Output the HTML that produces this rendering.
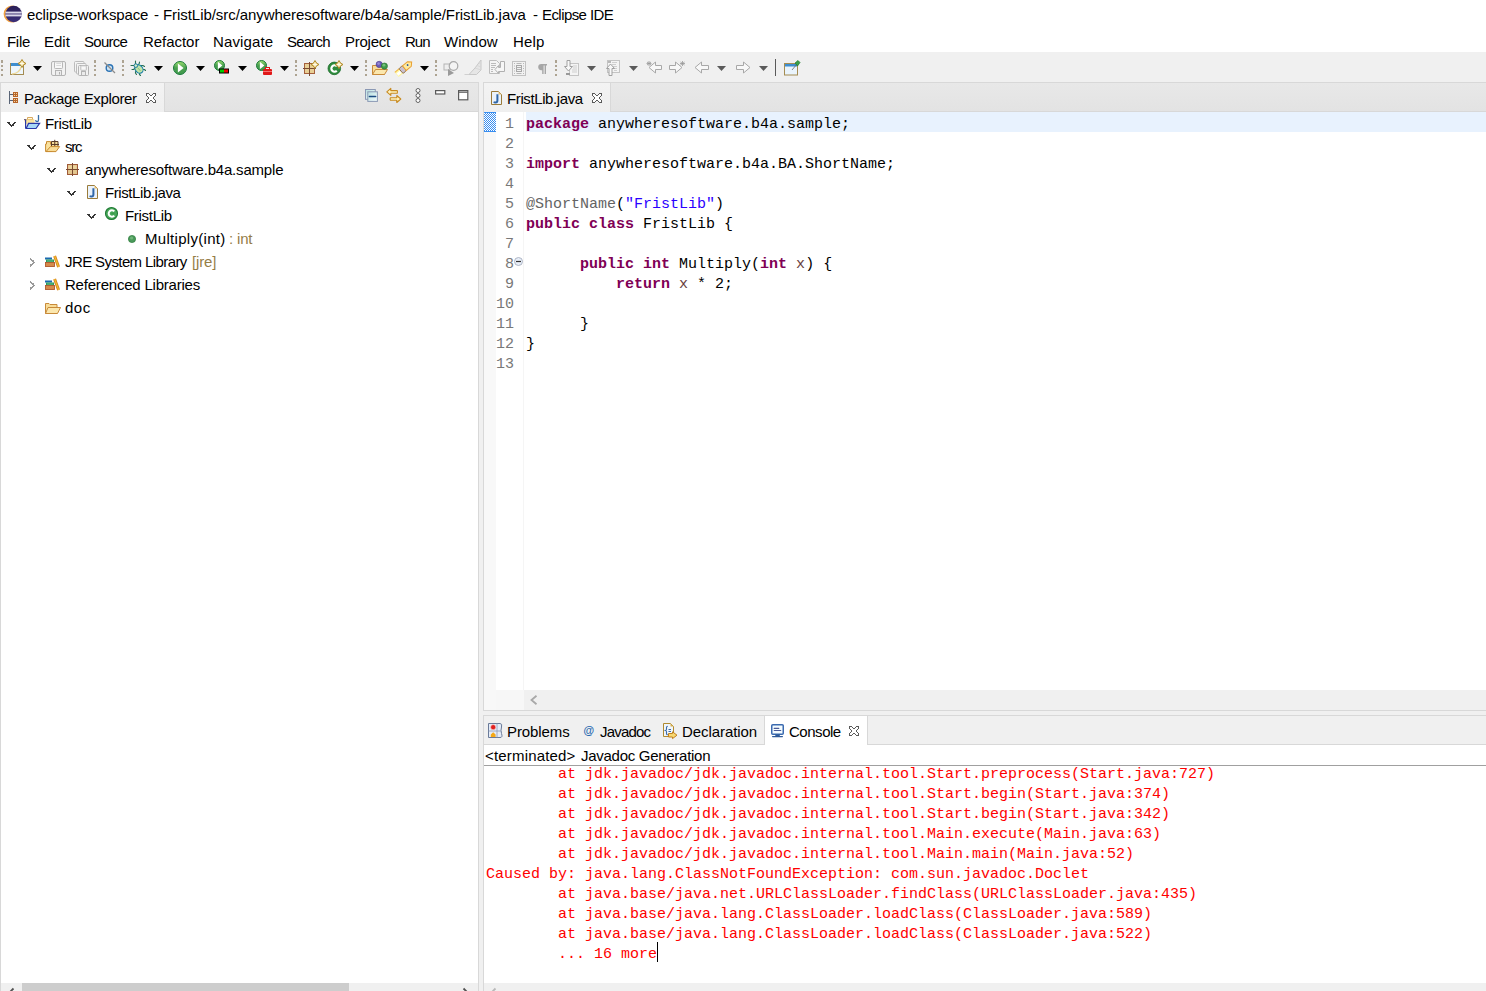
<!DOCTYPE html>
<html><head><meta charset="utf-8"><style>
*{box-sizing:border-box}
html,body{margin:0;padding:0}
body{width:1486px;height:991px;overflow:hidden;position:relative;background:#f0f0f0;font-family:"Liberation Sans",sans-serif;font-size:15px;color:#000}
.a{position:absolute}
svg.a{overflow:visible}
.t{position:absolute;white-space:pre;line-height:17px}
.m{position:absolute;white-space:pre;font-family:"Liberation Mono",monospace;font-size:15px;line-height:20px;tab-size:8}
.k{color:#7f0055;font-weight:bold}
.s{color:#2a00ff}
.an{color:#646464}
.ln{position:absolute;left:496px;width:18px;text-align:right;font-family:"Liberation Mono",monospace;font-size:15px;line-height:20px;color:#787878;white-space:pre}
.r{color:#ff0000}
.dec{color:#957d47}
</style></head><body>
<div class="a" style="left:0px;top:0px;width:1486px;height:52px;background:#fff;"></div>
<svg class="a" style="left:3px;top:5px" width="18" height="18" viewBox="0 0 18 18">
<defs><linearGradient id="eg" x1="0" y1="0" x2="0" y2="1"><stop offset="0" stop-color="#2b1f57"/><stop offset="1" stop-color="#3b2f7a"/></linearGradient></defs>
<circle cx="9.2" cy="9" r="8.6" fill="#f0a040"/>
<circle cx="10.7" cy="9" r="8.2" fill="url(#eg)"/>
<rect x="2.5" y="6.6" width="16.3" height="1.6" fill="#dcd8ea"/>
<rect x="2.5" y="8.2" width="16.3" height="1.6" fill="#9a92b8"/>
<rect x="2.5" y="9.8" width="16.3" height="1.6" fill="#dcd8ea"/>
</svg>
<div class="t" style="left:27px;top:6px;letter-spacing:-0.12px">eclipse-workspace</div>
<div class="t" style="left:154px;top:6px">-</div>
<div class="t" style="left:163px;top:6px;letter-spacing:-0.057px">FristLib/src/anywheresoftware/b4a/sample/FristLib.java</div>
<div class="t" style="left:533px;top:6px">-</div>
<div class="t" style="left:542px;top:6px;letter-spacing:-0.57px">Eclipse IDE</div>
<div class="t" style="left:7px;top:33px;letter-spacing:-0.3px">File</div>
<div class="t" style="left:44px;top:33px">Edit</div>
<div class="t" style="left:84px;top:33px;letter-spacing:-0.72px">Source</div>
<div class="t" style="left:143px;top:33px;letter-spacing:-0.04px">Refactor</div>
<div class="t" style="left:213px;top:33px;letter-spacing:0.13px">Navigate</div>
<div class="t" style="left:287px;top:33px;letter-spacing:-0.78px">Search</div>
<div class="t" style="left:345px;top:33px;letter-spacing:-0.25px">Project</div>
<div class="t" style="left:405px;top:33px;letter-spacing:-1.0px">Run</div>
<div class="t" style="left:444px;top:33px;letter-spacing:0.06px">Window</div>
<div class="t" style="left:513px;top:33px;letter-spacing:0.2px">Help</div>
<svg class="a" style="left:1px;top:59px" width="2" height="18" viewBox="0 0 2 18"><rect x="0" y="1" width="2" height="3" fill="#ada391"/><rect x="0" y="6" width="2" height="2" fill="#ada391"/><rect x="0" y="10" width="2" height="2" fill="#ada391"/><rect x="0" y="15" width="2" height="2" fill="#ada391"/></svg>
<svg class="a" style="left:94px;top:59px" width="2" height="18" viewBox="0 0 2 18"><rect x="0" y="1" width="2" height="3" fill="#ada391"/><rect x="0" y="6" width="2" height="2" fill="#ada391"/><rect x="0" y="10" width="2" height="2" fill="#ada391"/><rect x="0" y="15" width="2" height="2" fill="#ada391"/></svg>
<svg class="a" style="left:122px;top:59px" width="2" height="18" viewBox="0 0 2 18"><rect x="0" y="1" width="2" height="3" fill="#ada391"/><rect x="0" y="6" width="2" height="2" fill="#ada391"/><rect x="0" y="10" width="2" height="2" fill="#ada391"/><rect x="0" y="15" width="2" height="2" fill="#ada391"/></svg>
<svg class="a" style="left:295px;top:59px" width="2" height="18" viewBox="0 0 2 18"><rect x="0" y="1" width="2" height="3" fill="#ada391"/><rect x="0" y="6" width="2" height="2" fill="#ada391"/><rect x="0" y="10" width="2" height="2" fill="#ada391"/><rect x="0" y="15" width="2" height="2" fill="#ada391"/></svg>
<svg class="a" style="left:365px;top:59px" width="2" height="18" viewBox="0 0 2 18"><rect x="0" y="1" width="2" height="3" fill="#ada391"/><rect x="0" y="6" width="2" height="2" fill="#ada391"/><rect x="0" y="10" width="2" height="2" fill="#ada391"/><rect x="0" y="15" width="2" height="2" fill="#ada391"/></svg>
<svg class="a" style="left:435px;top:59px" width="2" height="18" viewBox="0 0 2 18"><rect x="0" y="1" width="2" height="3" fill="#ada391"/><rect x="0" y="6" width="2" height="2" fill="#ada391"/><rect x="0" y="10" width="2" height="2" fill="#ada391"/><rect x="0" y="15" width="2" height="2" fill="#ada391"/></svg>
<svg class="a" style="left:555px;top:59px" width="2" height="18" viewBox="0 0 2 18"><rect x="0" y="1" width="2" height="3" fill="#ada391"/><rect x="0" y="6" width="2" height="2" fill="#ada391"/><rect x="0" y="10" width="2" height="2" fill="#ada391"/><rect x="0" y="15" width="2" height="2" fill="#ada391"/></svg>
<svg class="a" style="left:10px;top:60px" width="16" height="16" viewBox="0 0 16 16">
<rect x="0.5" y="3.5" width="13" height="11" fill="#eef6fc" stroke="#a48c52"/>
<rect x="1" y="3" width="12" height="3" fill="#3e8ed0"/>
<path d="M2 14 Q10 13 11 7" stroke="#ecd89a" stroke-width="1.5" fill="none"/>
<path d="M12 -0.5 Q13 2.5 16 3.5 Q13 4.5 12 7.5 Q11 4.5 8 3.5 Q11 2.5 12 -0.5Z" fill="#f0d890" stroke="#b08a2a" stroke-width="1"/><path d="M12 1.5V5.5M10 3.5H14" stroke="#fffbe8" stroke-width="1.2"/>
</svg>
<svg class="a" style="left:33px;top:66px" width="9" height="5" viewBox="0 0 9 5"><path d="M0 0H9L4.5 5Z" fill="#000"/></svg>
<svg class="a" style="left:51px;top:61px" width="15" height="15" viewBox="0 0 15 15">
<rect x="0.5" y="0.5" width="14" height="14" rx="1.5" fill="#f2f2f2" stroke="#b4b4b4"/>
<rect x="3.5" y="0.8" width="8" height="6.7" rx="0.8" fill="#f8f8f8" stroke="#b8b8b8"/>
<path d="M5.3 2.5H10M5.3 4.5H10" stroke="#d0d0d0" stroke-width="0.8"/>
<rect x="4.5" y="9.5" width="6" height="5" fill="#ececec" stroke="#b4b4b4"/>
<rect x="8" y="11" width="1" height="2.5" fill="#b0b0b0"/>
</svg>
<svg class="a" style="left:74px;top:61px" width="16" height="15" viewBox="0 0 16 15">
<rect x="0.5" y="0.5" width="9.5" height="10.5" rx="1" fill="#f4f4f4" stroke="#bcbcbc"/>
<rect x="2.5" y="2.5" width="9.5" height="10.5" rx="1" fill="#f4f4f4" stroke="#bcbcbc"/>
<rect x="4.5" y="4.5" width="10" height="10" rx="1" fill="#f2f2f2" stroke="#b4b4b4"/>
<rect x="6.8" y="4.8" width="5.5" height="4.5" rx="0.6" fill="#f8f8f8" stroke="#bcbcbc"/>
<rect x="7.5" y="10.5" width="4" height="4" fill="#ececec" stroke="#b4b4b4"/>
</svg>
<svg class="a" style="left:104px;top:62px" width="12" height="12" viewBox="0 0 12 12">
<circle cx="5.5" cy="6" r="3.3" fill="#cde3f3" stroke="#2a72b4" stroke-width="1.4"/>
<path d="M0.5 0.5 L11 11" stroke="#8c8c8c" stroke-width="1.2"/>
</svg>
<svg class="a" style="left:128px;top:58px" width="22" height="20" viewBox="0 0 22 20">
<g stroke="#2a7050" stroke-width="1.1" fill="none" stroke-linecap="round">
<path d="M7.5 3 V6"/><path d="M11.5 4 L11.2 5.5 L10.3 6.8"/>
<path d="M3 7.5 H6"/><path d="M4 11.5 H6 L6.5 10"/>
<path d="M7.5 13.5 V15 L8.5 16.5"/><path d="M11.5 15 V16.5 L12.5 17.5"/>
<path d="M13 7.5 H15 L16.5 8.5"/><path d="M15 11.5 H16.5 L17.5 12.5"/></g>
<ellipse cx="11" cy="11" rx="3.6" ry="4.6" transform="rotate(-40 11 11)" fill="#c4e4a8" stroke="#1a80a8" stroke-width="1.1"/>
<path d="M9.5 9.5 L12.5 13" stroke="#7ab878" stroke-width="0.8"/>
<circle cx="7.8" cy="7.6" r="1.8" fill="#d8f0c8" stroke="#1a7aa0" stroke-width="1"/>
</svg>
<svg class="a" style="left:154px;top:66px" width="9" height="5" viewBox="0 0 9 5"><path d="M0 0H9L4.5 5Z" fill="#000"/></svg>
<svg class="a" style="left:172px;top:60px" width="16" height="16" viewBox="0 0 16 16"><defs><linearGradient id="rg87" x1="0" y1="0" x2="0" y2="1"><stop offset="0" stop-color="#9ade6e"/><stop offset="0.5" stop-color="#4aa050"/><stop offset="1" stop-color="#3f9a4c"/></linearGradient></defs>
<circle cx="8" cy="8" r="6.5" fill="url(#rg87)" stroke="#1a7a3a" stroke-width="1"/>
<path d="M5.90 3.38 L11.64 8.00 L5.90 12.62Z" fill="#fff"/></svg>
<svg class="a" style="left:196px;top:66px" width="9" height="5" viewBox="0 0 9 5"><path d="M0 0H9L4.5 5Z" fill="#000"/></svg>
<svg class="a" style="left:213px;top:59px" width="17" height="17" viewBox="0 0 17 17"><defs><linearGradient id="rg6_55_5" x1="0" y1="0" x2="0" y2="1"><stop offset="0" stop-color="#9ade6e"/><stop offset="0.5" stop-color="#4aa050"/><stop offset="1" stop-color="#3f9a4c"/></linearGradient></defs>
<circle cx="6.5" cy="6.5" r="5.0" fill="url(#rg6_55_5)" stroke="#1a7a3a" stroke-width="1"/>
<path d="M4.85 2.87 L9.36 6.50 L4.85 10.13Z" fill="#fff"/>
<rect x="6" y="9.5" width="10" height="5" fill="#000"/>
<rect x="7" y="10.5" width="4" height="3" fill="#0c0"/>
<rect x="11" y="10.5" width="4" height="3" fill="#e00"/>
</svg>
<svg class="a" style="left:238px;top:66px" width="9" height="5" viewBox="0 0 9 5"><path d="M0 0H9L4.5 5Z" fill="#000"/></svg>
<svg class="a" style="left:255px;top:59px" width="18" height="17" viewBox="0 0 18 17"><defs><linearGradient id="rg6_55_5" x1="0" y1="0" x2="0" y2="1"><stop offset="0" stop-color="#9ade6e"/><stop offset="0.5" stop-color="#4aa050"/><stop offset="1" stop-color="#3f9a4c"/></linearGradient></defs>
<circle cx="6.5" cy="6.5" r="5.0" fill="url(#rg6_55_5)" stroke="#1a7a3a" stroke-width="1"/>
<path d="M4.85 2.87 L9.36 6.50 L4.85 10.13Z" fill="#fff"/>
<rect x="8" y="10" width="9" height="6" rx="1" fill="#e01818"/>
<rect x="10.5" y="8.5" width="4" height="2" fill="none" stroke="#e01818"/>
<path d="M8 12.5H17" stroke="#ff9a9a" stroke-width="0.7"/>
</svg>
<svg class="a" style="left:280px;top:66px" width="9" height="5" viewBox="0 0 9 5"><path d="M0 0H9L4.5 5Z" fill="#000"/></svg>
<svg class="a" style="left:303px;top:61px" width="16" height="16" viewBox="0 0 16 16">
<rect x="1.5" y="2.5" width="10" height="10" fill="#e8cf95" stroke="#a45f3c"/>
<path d="M6.5 1V15M0 7.5H13" stroke="#7a4a30" stroke-width="1"/>
<path d="M12 -0.5 Q13 2.5 16 3.5 Q13 4.5 12 7.5 Q11 4.5 8 3.5 Q11 2.5 12 -0.5Z" fill="#f0d890" stroke="#b08a2a" stroke-width="1"/><path d="M12 1.5V5.5M10 3.5H14" stroke="#fffbe8" stroke-width="1.2"/>
</svg>
<svg class="a" style="left:327px;top:61px" width="16" height="16" viewBox="0 0 16 16">
<circle cx="7.3" cy="7.4" r="6.3" fill="#2e8b3c" stroke="#1b6a2a" stroke-width="0.8"/>
<path d="M9.8 5.2 A3.2 3.2 0 1 0 9.8 9.8" stroke="#fff" stroke-width="2.2" fill="none"/>
<path d="M12 -0.5 Q13 2.5 16 3.5 Q13 4.5 12 7.5 Q11 4.5 8 3.5 Q11 2.5 12 -0.5Z" fill="#f0d890" stroke="#b08a2a" stroke-width="1"/><path d="M12 1.5V5.5M10 3.5H14" stroke="#fffbe8" stroke-width="1.2"/>
</svg>
<svg class="a" style="left:350px;top:66px" width="9" height="5" viewBox="0 0 9 5"><path d="M0 0H9L4.5 5Z" fill="#000"/></svg>
<svg class="a" style="left:372px;top:60px" width="16" height="16" viewBox="0 0 16 16">
<path d="M0.5 5.5 H5 L6 7 H12.5 V14.5 H0.5Z" fill="#f7dc98" stroke="#c88a3a"/>
<path d="M0.5 14.5 L3.5 9.5 H15.5 L12.5 14.5Z" fill="#fbe7ae" stroke="#c88a3a"/>
<circle cx="7.2" cy="4.4" r="3.1" fill="#6b5bb8" stroke="#4a3a90" stroke-width="0.6"/><circle cx="6.6" cy="3.6" r="1.4" fill="#a89ae0" opacity="0.7"/>
<circle cx="12.4" cy="6.1" r="3.1" fill="#3f9a4a" stroke="#246a2e" stroke-width="0.6"/><circle cx="11.9" cy="5.2" r="1.4" fill="#8ad090" opacity="0.7"/>
</svg>
<svg class="a" style="left:392px;top:57px" width="24" height="22" viewBox="0 0 24 22">
<g transform="rotate(-40 12 11.5)">
<rect x="2.5" y="8.5" width="6.5" height="6" fill="#fff6a0"/>
<rect x="3" y="10.5" width="5" height="3" fill="#ffffff"/>
<path d="M2.5 8.5 H8" stroke="#f0b040" stroke-width="1"/>
<rect x="8" y="8.3" width="4.5" height="6.4" rx="1" fill="#c8c0d0" stroke="#907040" stroke-width="0.9"/>
<path d="M12.5 8.5 H19 L22 11.5 L19 14.5 H12.5Z" fill="#fdeaa0" stroke="#eaa030" stroke-width="1"/>
<circle cx="17" cy="11.2" r="0.9" fill="#2a5aa0"/>
</g>
</svg>
<svg class="a" style="left:420px;top:66px" width="9" height="5" viewBox="0 0 9 5"><path d="M0 0H9L4.5 5Z" fill="#000"/></svg>
<svg class="a" style="left:443px;top:61px" width="16" height="16" viewBox="0 0 16 16">
<rect x="1" y="3" width="6" height="6" fill="#eee" stroke="#b4b4b4"/>
<circle cx="10.5" cy="5" r="4.3" fill="#f4f4f4" stroke="#a8a8a8" stroke-width="1.2"/>
<path d="M5 8 L11 12 L5 15Z" fill="#9a9a9a"/>
</svg>
<svg class="a" style="left:464px;top:59px" width="18" height="17" viewBox="0 0 18 17">
<path d="M5 15.5 L11 9 L17 1 V11 L12.5 15.5Z" fill="#e6e6e6" stroke="#c8c8c8" stroke-width="1" stroke-linejoin="round"/>
<path d="M11 9 L17 11 M13 6.5 L17 8 M15 4 L17 5" stroke="#d4d4d4" stroke-width="0.8"/>
<path d="M0.5 15.5 H5" stroke="#d0d0d0" stroke-width="1"/>
</svg>
<svg class="a" style="left:489px;top:60px" width="16" height="15" viewBox="0 0 16 15">
<path d="M0.5 0.5 H7.5 L10.5 3.5 V13.5 H0.5Z" fill="#f4f4f4" stroke="#bdbdbd"/>
<path d="M2 3.5H7M2 5.5H7M2 7.5H6M2 9.5H4M2 11.5H4" stroke="#acacac" stroke-width="0.8"/>
<path d="M11.5 1.5 H15.5 V11.5 H9.5 V13.5 L6 9.5 L9.5 5.5 V7.5 H11.5Z" fill="#f6f6f6" stroke="#b0b0b0" stroke-width="1" stroke-linejoin="round"/>
</svg>
<svg class="a" style="left:512px;top:61px" width="14" height="15" viewBox="0 0 14 15">
<rect x="0.5" y="0.5" width="13" height="14" fill="#f2f2f2" stroke="#c2c2c2"/>
<path d="M2 2.5H3M2 5H3M2 7.5H3M2 10H3M2 12.5H3M11 2.5H12M11 5H12M11 7.5H12M11 10H12M11 12.5H12M4.5 2.5H9.5M4.5 12.5H9.5" stroke="#b8b8b8"/>
<rect x="4.5" y="4.5" width="5" height="6" fill="none" stroke="#a8a8a8"/>
<path d="M4.5 6.5H9.5M4.5 8.5H9.5" stroke="#b0b0b0"/>
</svg>
<svg class="a" style="left:538px;top:64px" width="9" height="10" viewBox="0 0 9 10">
<path d="M3.3 0 H9 V1.6 H8 V10 H6.6 V1.6 H5.6 V10 H4.2 V6.2 H3.3 A3.1 3.1 0 0 1 3.3 0Z" fill="#a6a6a6"/>
</svg>
<svg class="a" style="left:564px;top:60px" width="15" height="16" viewBox="0 0 15 16">
<rect x="5.5" y="3.5" width="9" height="12" fill="#f4f4f4" stroke="#c4c4c4"/>
<path d="M9 6H13M9 8H13M8 10H13M8 12H13" stroke="#cfcfcf"/>
<path d="M3 0.5H6V6.5H8.5L4.5 11L0.5 6.5H3Z" fill="#f8f8f8" stroke="#a0a0a0"/>
<rect x="2" y="13" width="4" height="2" fill="#999"/>
</svg>
<svg class="a" style="left:587px;top:66px" width="9" height="5" viewBox="0 0 9 5"><path d="M0 0H9L4.5 5Z" fill="#5a5a5a"/></svg>
<svg class="a" style="left:606px;top:60px" width="15" height="16" viewBox="0 0 15 16">
<rect x="1.5" y="0.5" width="12" height="12" fill="#f4f4f4" stroke="#c4c4c4"/>
<rect x="2" y="1" width="3" height="2" fill="#b8b8b8"/>
<path d="M6 2.5H11M6 4.5H10M7 6.5H11M8 8.5H11M8 10.5H11" stroke="#cfcfcf"/>
<path d="M4.5 4L8.5 8.5H6V15.5H3V8.5H0.5Z" fill="#f8f8f8" stroke="#a0a0a0"/>
</svg>
<svg class="a" style="left:629px;top:66px" width="9" height="5" viewBox="0 0 9 5"><path d="M0 0H9L4.5 5Z" fill="#5a5a5a"/></svg>
<svg class="a" style="left:646px;top:61px" width="17" height="13" viewBox="0 0 17 13">
<path d="M15.5 4.5H9.5V1L3 6.5L9.5 12V8.5H15.5Z" fill="#f8f8f8" stroke="#a8a8a8"/>
<path d="M3 0V5M0.5 2.5H5.5M1 1L5 4M5 1L1 4" stroke="#999" stroke-width="0.8"/>
</svg>
<svg class="a" style="left:669px;top:61px" width="17" height="13" viewBox="0 0 17 13">
<path d="M0.5 4.5H6.5V1L13 6.5L6.5 12V8.5H0.5Z" fill="#f8f8f8" stroke="#a8a8a8"/>
<path d="M13.5 0V5M11 2.5H16M11.5 1L15.5 4M15.5 1L11.5 4" stroke="#999" stroke-width="0.8"/>
</svg>
<svg class="a" style="left:694px;top:61px" width="15" height="13" viewBox="0 0 15 13">
<path d="M14.5 4.5H7.5V1L1 6.5L7.5 12V8.5H14.5Z" fill="#f8f8f8" stroke="#a8a8a8"/>
</svg>
<svg class="a" style="left:717px;top:66px" width="9" height="5" viewBox="0 0 9 5"><path d="M0 0H9L4.5 5Z" fill="#5a5a5a"/></svg>
<svg class="a" style="left:736px;top:61px" width="15" height="13" viewBox="0 0 15 13">
<path d="M0.5 4.5H7.5V1L14 6.5L7.5 12V8.5H0.5Z" fill="#f8f8f8" stroke="#a8a8a8"/>
</svg>
<svg class="a" style="left:759px;top:66px" width="9" height="5" viewBox="0 0 9 5"><path d="M0 0H9L4.5 5Z" fill="#5a5a5a"/></svg>
<div class="a" style="left:775px;top:59px;width:1px;height:17px;background:#5a5a5a;"></div>
<svg class="a" style="left:784px;top:61px" width="16" height="16" viewBox="0 0 16 16">
<rect x="0.5" y="2.5" width="13" height="11.5" fill="#eaf4fc" stroke="#a48c52"/>
<rect x="1" y="3" width="12" height="2.5" fill="#3e8ed0"/>
<path d="M8 9 L13 3" stroke="#666" stroke-width="0.8"/>
<path d="M11 2 L14 -0.5 L16 1.5 L13.5 5 Z" fill="#3aa04a" stroke="#1f7a2a" stroke-width="0.7"/>
</svg>
<div class="a" style="left:0px;top:82px;width:479px;height:909px;background:#fff;border:1px solid #d8d8d8;border-bottom:none"></div>
<div class="a" style="left:1px;top:83px;width:477px;height:29px;background:linear-gradient(#e8e8e8,#e3e3e3);border-bottom:1px solid #d8d8d8"></div>
<div class="a" style="left:1px;top:83px;width:164px;height:29px;background:linear-gradient(#f3f3f3,#efefef);border-right:1px solid #d8d8d8"></div>
<svg class="a" style="left:9px;top:91px" width="10" height="13" viewBox="0 0 10 13">
<rect x="0" y="0" width="1" height="13" fill="#5a6577"/>
<rect x="1" y="3" width="3" height="1" fill="#5a6577"/>
<rect x="1" y="9" width="3" height="1" fill="#5a6577"/>
<rect x="4" y="1" width="5" height="5" fill="#b8652a"/>
<rect x="4" y="7" width="5" height="5" fill="#b8652a"/>
<g fill="#f0d8a8"><rect x="5" y="2" width="1" height="1"/><rect x="7" y="2" width="1" height="1"/><rect x="5" y="4" width="1" height="1"/><rect x="7" y="4" width="1" height="1"/>
<rect x="5" y="8" width="1" height="1"/><rect x="7" y="8" width="1" height="1"/><rect x="5" y="10" width="1" height="1"/><rect x="7" y="10" width="1" height="1"/></g>
</svg>
<div class="t" style="left:24px;top:90px;letter-spacing:-0.36px">Package Explorer</div>
<svg class="a" style="left:146px;top:93px" width="10" height="10" viewBox="0 0 10 10"><g fill="#fff" shape-rendering="crispEdges"><rect x="1" y="1" width="1" height="1"/><rect x="2" y="1" width="1" height="1"/><rect x="7" y="1" width="1" height="1"/><rect x="8" y="1" width="1" height="1"/><rect x="1" y="2" width="1" height="1"/><rect x="2" y="2" width="1" height="1"/><rect x="3" y="2" width="1" height="1"/><rect x="6" y="2" width="1" height="1"/><rect x="7" y="2" width="1" height="1"/><rect x="8" y="2" width="1" height="1"/><rect x="2" y="3" width="1" height="1"/><rect x="3" y="3" width="1" height="1"/><rect x="4" y="3" width="1" height="1"/><rect x="5" y="3" width="1" height="1"/><rect x="6" y="3" width="1" height="1"/><rect x="7" y="3" width="1" height="1"/><rect x="3" y="4" width="1" height="1"/><rect x="4" y="4" width="1" height="1"/><rect x="5" y="4" width="1" height="1"/><rect x="6" y="4" width="1" height="1"/><rect x="3" y="5" width="1" height="1"/><rect x="4" y="5" width="1" height="1"/><rect x="5" y="5" width="1" height="1"/><rect x="6" y="5" width="1" height="1"/><rect x="2" y="6" width="1" height="1"/><rect x="3" y="6" width="1" height="1"/><rect x="4" y="6" width="1" height="1"/><rect x="5" y="6" width="1" height="1"/><rect x="6" y="6" width="1" height="1"/><rect x="7" y="6" width="1" height="1"/><rect x="1" y="7" width="1" height="1"/><rect x="2" y="7" width="1" height="1"/><rect x="3" y="7" width="1" height="1"/><rect x="6" y="7" width="1" height="1"/><rect x="7" y="7" width="1" height="1"/><rect x="8" y="7" width="1" height="1"/><rect x="1" y="8" width="1" height="1"/><rect x="2" y="8" width="1" height="1"/><rect x="7" y="8" width="1" height="1"/><rect x="8" y="8" width="1" height="1"/></g><g fill="#5a5a5a" shape-rendering="crispEdges"><rect x="0" y="0" width="1" height="1"/><rect x="1" y="0" width="1" height="1"/><rect x="2" y="0" width="1" height="1"/><rect x="7" y="0" width="1" height="1"/><rect x="8" y="0" width="1" height="1"/><rect x="9" y="0" width="1" height="1"/><rect x="0" y="1" width="1" height="1"/><rect x="3" y="1" width="1" height="1"/><rect x="6" y="1" width="1" height="1"/><rect x="9" y="1" width="1" height="1"/><rect x="0" y="2" width="1" height="1"/><rect x="4" y="2" width="1" height="1"/><rect x="5" y="2" width="1" height="1"/><rect x="9" y="2" width="1" height="1"/><rect x="1" y="3" width="1" height="1"/><rect x="8" y="3" width="1" height="1"/><rect x="2" y="4" width="1" height="1"/><rect x="7" y="4" width="1" height="1"/><rect x="2" y="5" width="1" height="1"/><rect x="7" y="5" width="1" height="1"/><rect x="1" y="6" width="1" height="1"/><rect x="8" y="6" width="1" height="1"/><rect x="0" y="7" width="1" height="1"/><rect x="4" y="7" width="1" height="1"/><rect x="5" y="7" width="1" height="1"/><rect x="9" y="7" width="1" height="1"/><rect x="0" y="8" width="1" height="1"/><rect x="3" y="8" width="1" height="1"/><rect x="6" y="8" width="1" height="1"/><rect x="9" y="8" width="1" height="1"/><rect x="0" y="9" width="1" height="1"/><rect x="1" y="9" width="1" height="1"/><rect x="2" y="9" width="1" height="1"/><rect x="7" y="9" width="1" height="1"/><rect x="8" y="9" width="1" height="1"/><rect x="9" y="9" width="1" height="1"/></g></svg>
<svg class="a" style="left:362px;top:84px" width="42" height="22" viewBox="0 0 42 22">
<defs><linearGradient id="tg" x1="0" y1="0" x2="1" y2="1"><stop offset="0" stop-color="#b8e0e0"/><stop offset="1" stop-color="#f4fcfc"/></linearGradient></defs>
<rect x="3.5" y="5.5" width="9.8" height="9.8" fill="url(#tg)" stroke="#8a98b4" stroke-width="1"/>
<rect x="5.8" y="7.8" width="9.6" height="9.6" fill="url(#tg)" stroke="#8a98b4" stroke-width="1"/>
<path d="M7.4 12.4 H13.6" stroke="#1a4a80" stroke-width="1.5" stroke-linecap="round"/>
<path d="M24.8 7.9 L28.8 4.4 V6.6 H35.2 Q35.8 7.9 35.2 9.2 H28.8 V11.4Z" fill="#fff4c0" stroke="#c88a20" stroke-width="1.1" stroke-linejoin="round"/>
<path d="M38.8 15 L34.8 11.5 V13.7 H28.4 Q27.8 15 28.4 16.3 H34.8 V18.5Z" fill="#fff4c0" stroke="#c88a20" stroke-width="1.1" stroke-linejoin="round"/>
</svg>
<svg class="a" style="left:415px;top:88px" width="6" height="15" viewBox="0 0 6 15">
<circle cx="3" cy="2.5" r="2" fill="#fff" stroke="#555" stroke-width="0.9"/>
<circle cx="3" cy="7.5" r="2" fill="#fff" stroke="#555" stroke-width="0.9"/>
<circle cx="3" cy="12.5" r="2" fill="#fff" stroke="#555" stroke-width="0.9"/>
</svg>
<svg class="a" style="left:435px;top:90px" width="11" height="5" viewBox="0 0 11 5"><rect x="0.6" y="0.6" width="9.2" height="3.4" fill="#fff" stroke="#5a5a5a" stroke-width="1.2"/></svg>
<svg class="a" style="left:458px;top:90px" width="11" height="11" viewBox="0 0 11 11"><rect x="0.6" y="0.6" width="9.2" height="9.2" fill="#fff" stroke="#5a5a5a" stroke-width="1.2"/><path d="M1 2.2H9.6" stroke="#5a5a5a" stroke-width="1.2"/></svg>
<svg class="a" style="left:7px;top:122px" width="9" height="5" viewBox="0 0 9 5"><g fill="#363636" shape-rendering="crispEdges"><rect x="0" y="0" width="1" height="1"/><rect x="1" y="0" width="1" height="1"/><rect x="2" y="0" width="1" height="1"/><rect x="7" y="0" width="1" height="1"/><rect x="8" y="0" width="1" height="1"/><rect x="1" y="1" width="1" height="1"/><rect x="2" y="1" width="1" height="1"/><rect x="6" y="1" width="1" height="1"/><rect x="7" y="1" width="1" height="1"/><rect x="2" y="2" width="1" height="1"/><rect x="3" y="2" width="1" height="1"/><rect x="5" y="2" width="1" height="1"/><rect x="6" y="2" width="1" height="1"/><rect x="3" y="3" width="1" height="1"/><rect x="4" y="3" width="1" height="1"/><rect x="5" y="3" width="1" height="1"/><rect x="6" y="3" width="1" height="1"/><rect x="4" y="4" width="1" height="1"/></g></svg>
<svg class="a" style="left:22px;top:112px" width="20" height="20" viewBox="0 0 20 20">
<path d="M2 7.5 H12.5 V12 H3.5Z" fill="#fbe6a0"/>
<path d="M5.5 7.2 V5.5 H10.5 V7.2" stroke="#d8a860" stroke-width="1" fill="#fff8e0"/>
<path d="M2 7.6 H4.5" stroke="#6a5a7a" stroke-width="1.1"/>
<path d="M4.5 7.6 H11.5" stroke="#e8c070" stroke-width="1"/>
<path d="M3.5 8 V11 L4 15.5" stroke="#f0d890" stroke-width="1.2" fill="none"/>
<path d="M3.6 8 V15.8 H4.4" stroke="#2a3aa8" stroke-width="1.2" fill="none"/>
<path d="M6.5 11.4 H17.6 L14 16.5 H4.2Z" fill="#a8d8f8" stroke="#2838a8" stroke-width="1.2"/>
<path d="M16.5 3 V8 Q16.5 9.6 15 9.6 Q13.8 9.6 13.6 8.2" stroke="#3a6ea5" stroke-width="1.3" fill="none"/>
</svg>
<div class="t" style="left:45px;top:115px;letter-spacing:-0.29px">FristLib</div>
<svg class="a" style="left:27px;top:145px" width="9" height="5" viewBox="0 0 9 5"><g fill="#363636" shape-rendering="crispEdges"><rect x="0" y="0" width="1" height="1"/><rect x="1" y="0" width="1" height="1"/><rect x="2" y="0" width="1" height="1"/><rect x="7" y="0" width="1" height="1"/><rect x="8" y="0" width="1" height="1"/><rect x="1" y="1" width="1" height="1"/><rect x="2" y="1" width="1" height="1"/><rect x="6" y="1" width="1" height="1"/><rect x="7" y="1" width="1" height="1"/><rect x="2" y="2" width="1" height="1"/><rect x="3" y="2" width="1" height="1"/><rect x="5" y="2" width="1" height="1"/><rect x="6" y="2" width="1" height="1"/><rect x="3" y="3" width="1" height="1"/><rect x="4" y="3" width="1" height="1"/><rect x="5" y="3" width="1" height="1"/><rect x="6" y="3" width="1" height="1"/><rect x="4" y="4" width="1" height="1"/></g></svg>
<svg class="a" style="left:42px;top:136px" width="20" height="20" viewBox="0 0 20 20">
<path d="M3.6 8 H4.5 V5.6 H8.6 V8 H10 V15.5 H3.6Z" fill="#fae29e" stroke="#c88a30" stroke-width="1"/>
<rect x="9.5" y="5.5" width="6.5" height="5" fill="#f4dc98"/>
<path d="M9.5 5.5 H16 M9.5 5.5 V10.5 M16 5.5 V10.5 M12.75 3.8 V10.5 M8.8 8.5 H17" stroke="#5a3a28" stroke-width="1"/>
<path d="M8.5 10.6 H17.6 L14 15.6 H4Z" fill="#f8dc98" stroke="#c88a30" stroke-width="1"/>
</svg>
<div class="t" style="left:65px;top:138px;letter-spacing:-1.2px">src</div>
<svg class="a" style="left:47px;top:168px" width="9" height="5" viewBox="0 0 9 5"><g fill="#363636" shape-rendering="crispEdges"><rect x="0" y="0" width="1" height="1"/><rect x="1" y="0" width="1" height="1"/><rect x="2" y="0" width="1" height="1"/><rect x="7" y="0" width="1" height="1"/><rect x="8" y="0" width="1" height="1"/><rect x="1" y="1" width="1" height="1"/><rect x="2" y="1" width="1" height="1"/><rect x="6" y="1" width="1" height="1"/><rect x="7" y="1" width="1" height="1"/><rect x="2" y="2" width="1" height="1"/><rect x="3" y="2" width="1" height="1"/><rect x="5" y="2" width="1" height="1"/><rect x="6" y="2" width="1" height="1"/><rect x="3" y="3" width="1" height="1"/><rect x="4" y="3" width="1" height="1"/><rect x="5" y="3" width="1" height="1"/><rect x="6" y="3" width="1" height="1"/><rect x="4" y="4" width="1" height="1"/></g></svg>
<svg class="a" style="left:66px;top:163px" width="13" height="13" viewBox="0 0 13 13">
<rect x="1.5" y="1.5" width="10" height="10" fill="#e0c08a" stroke="#a05a38"/>
<rect x="2.5" y="2.5" width="3.5" height="3.5" fill="#ecd49c"/><rect x="7" y="2.5" width="3.5" height="3.5" fill="#ecd49c"/>
<rect x="2.5" y="7" width="3.5" height="3.5" fill="#e4c890"/><rect x="7" y="7" width="3.5" height="3.5" fill="#e4c890"/>
<path d="M6.5 0V13M0 6.5H13" stroke="#7a4a30" stroke-width="1"/>
</svg>
<div class="t" style="left:85px;top:161px;letter-spacing:-0.19px">anywheresoftware.b4a.sample</div>
<svg class="a" style="left:67px;top:191px" width="9" height="5" viewBox="0 0 9 5"><g fill="#363636" shape-rendering="crispEdges"><rect x="0" y="0" width="1" height="1"/><rect x="1" y="0" width="1" height="1"/><rect x="2" y="0" width="1" height="1"/><rect x="7" y="0" width="1" height="1"/><rect x="8" y="0" width="1" height="1"/><rect x="1" y="1" width="1" height="1"/><rect x="2" y="1" width="1" height="1"/><rect x="6" y="1" width="1" height="1"/><rect x="7" y="1" width="1" height="1"/><rect x="2" y="2" width="1" height="1"/><rect x="3" y="2" width="1" height="1"/><rect x="5" y="2" width="1" height="1"/><rect x="6" y="2" width="1" height="1"/><rect x="3" y="3" width="1" height="1"/><rect x="4" y="3" width="1" height="1"/><rect x="5" y="3" width="1" height="1"/><rect x="6" y="3" width="1" height="1"/><rect x="4" y="4" width="1" height="1"/></g></svg>
<svg class="a" style="left:87px;top:185px" width="12" height="14" viewBox="0 0 12 14">
<path d="M0.5 0.5 H7.5 L10.5 3.5 V13.5 H0.5Z" fill="#eaf2fb" stroke="#9a7b3a"/>
<path d="M7.5 0.5 L10.5 3.5 H7.5Z" fill="#e8c070"/>
<path d="M6.4 3.2 V9.6 Q6.4 11.6 4.6 11.6 Q3.4 11.6 3 10.6" stroke="#2f66a8" stroke-width="2" fill="none"/>
</svg>
<div class="t" style="left:105px;top:184px;letter-spacing:-0.42px">FristLib.java</div>
<svg class="a" style="left:87px;top:214px" width="9" height="5" viewBox="0 0 9 5"><g fill="#363636" shape-rendering="crispEdges"><rect x="0" y="0" width="1" height="1"/><rect x="1" y="0" width="1" height="1"/><rect x="2" y="0" width="1" height="1"/><rect x="7" y="0" width="1" height="1"/><rect x="8" y="0" width="1" height="1"/><rect x="1" y="1" width="1" height="1"/><rect x="2" y="1" width="1" height="1"/><rect x="6" y="1" width="1" height="1"/><rect x="7" y="1" width="1" height="1"/><rect x="2" y="2" width="1" height="1"/><rect x="3" y="2" width="1" height="1"/><rect x="5" y="2" width="1" height="1"/><rect x="6" y="2" width="1" height="1"/><rect x="3" y="3" width="1" height="1"/><rect x="4" y="3" width="1" height="1"/><rect x="5" y="3" width="1" height="1"/><rect x="6" y="3" width="1" height="1"/><rect x="4" y="4" width="1" height="1"/></g></svg>
<svg class="a" style="left:105px;top:207px" width="13" height="13" viewBox="0 0 13 13">
<circle cx="6.5" cy="6.5" r="6" fill="#48a85a" stroke="#1f7a34" stroke-width="1.1"/>
<path d="M9.3 4.4 A3.2 3.2 0 1 0 9.3 8.6" stroke="#fff" stroke-width="2" fill="none"/>
<path d="M6.5 6.5 H9.5" stroke="#3a9a4a" stroke-width="1.4"/>
</svg>
<div class="t" style="left:125px;top:207px;letter-spacing:-0.29px">FristLib</div>
<svg class="a" style="left:128px;top:235px" width="8" height="8" viewBox="0 0 8 8"><circle cx="4" cy="4" r="3.6" fill="#4a9a5a" stroke="#2a7a3a" stroke-width="0.7"/><circle cx="3.6" cy="3" r="1.6" fill="#8ac890" opacity="0.6"/></svg>
<div class="t" style="left:145px;top:230px;letter-spacing:0.3px">Multiply(int)</div>
<div class="t" style="left:229px;top:230px;color:#957d47">:</div>
<div class="t" style="left:237px;top:230px;letter-spacing:-0.2px;color:#957d47">int</div>
<svg class="a" style="left:30px;top:258px" width="5" height="9" viewBox="0 0 5 9"><g fill="#9a9a9a" shape-rendering="crispEdges"><rect x="0" y="0" width="1" height="1"/><rect x="0" y="1" width="1" height="1"/><rect x="1" y="1" width="1" height="1"/><rect x="1" y="2" width="1" height="1"/><rect x="2" y="2" width="1" height="1"/><rect x="3" y="2" width="1" height="1"/><rect x="2" y="3" width="1" height="1"/><rect x="3" y="3" width="1" height="1"/><rect x="3" y="4" width="1" height="1"/><rect x="4" y="4" width="1" height="1"/><rect x="2" y="5" width="1" height="1"/><rect x="3" y="5" width="1" height="1"/><rect x="0" y="6" width="1" height="1"/><rect x="1" y="6" width="1" height="1"/><rect x="2" y="6" width="1" height="1"/><rect x="0" y="7" width="1" height="1"/><rect x="1" y="7" width="1" height="1"/><rect x="0" y="8" width="1" height="1"/></g></svg>
<svg class="a" style="left:45px;top:255px" width="16" height="13" viewBox="0 0 16 13">
<rect x="0" y="2.5" width="7" height="2" fill="#1a6ab0"/>
<rect x="1" y="4.5" width="8" height="3" fill="#2a9a60"/><path d="M2 6H8" stroke="#7ac890" stroke-width="0.8"/>
<rect x="0.5" y="7.5" width="9" height="4" fill="#d68a4a" stroke="#b0582a" stroke-width="0.9"/>
<path d="M9.6 1 L13.6 12" stroke="#d88020" stroke-width="3"/>
<path d="M9.6 1 L13.6 12" stroke="#f0c030" stroke-width="1.2"/>
</svg>
<div class="t" style="left:65px;top:253px;letter-spacing:-0.6px">JRE System Library</div>
<div class="t" style="left:192px;top:253px;letter-spacing:-0.15px;color:#957d47">[jre]</div>
<svg class="a" style="left:30px;top:281px" width="5" height="9" viewBox="0 0 5 9"><g fill="#9a9a9a" shape-rendering="crispEdges"><rect x="0" y="0" width="1" height="1"/><rect x="0" y="1" width="1" height="1"/><rect x="1" y="1" width="1" height="1"/><rect x="1" y="2" width="1" height="1"/><rect x="2" y="2" width="1" height="1"/><rect x="3" y="2" width="1" height="1"/><rect x="2" y="3" width="1" height="1"/><rect x="3" y="3" width="1" height="1"/><rect x="3" y="4" width="1" height="1"/><rect x="4" y="4" width="1" height="1"/><rect x="2" y="5" width="1" height="1"/><rect x="3" y="5" width="1" height="1"/><rect x="0" y="6" width="1" height="1"/><rect x="1" y="6" width="1" height="1"/><rect x="2" y="6" width="1" height="1"/><rect x="0" y="7" width="1" height="1"/><rect x="1" y="7" width="1" height="1"/><rect x="0" y="8" width="1" height="1"/></g></svg>
<svg class="a" style="left:45px;top:278px" width="16" height="13" viewBox="0 0 16 13">
<rect x="0" y="2.5" width="7" height="2" fill="#1a6ab0"/>
<rect x="1" y="4.5" width="8" height="3" fill="#2a9a60"/><path d="M2 6H8" stroke="#7ac890" stroke-width="0.8"/>
<rect x="0.5" y="7.5" width="9" height="4" fill="#d68a4a" stroke="#b0582a" stroke-width="0.9"/>
<path d="M9.6 1 L13.6 12" stroke="#d88020" stroke-width="3"/>
<path d="M9.6 1 L13.6 12" stroke="#f0c030" stroke-width="1.2"/>
</svg>
<div class="t" style="left:65px;top:276px;letter-spacing:-0.21px">Referenced Libraries</div>
<svg class="a" style="left:45px;top:302px" width="16" height="12" viewBox="0 0 16 12">
<path d="M0.5 1.5 H4 L5 2.5 H12 V11.5 H0.5Z" fill="#f7dc98" stroke="#c88a3a"/>
<path d="M0.5 11.5 L3 5.5 H15.5 L12.5 11.5Z" fill="#fbe7ae" stroke="#c88a3a"/>
</svg>
<div class="t" style="left:65px;top:299px;letter-spacing:0.5px">doc</div>
<div class="a" style="left:1px;top:983px;width:477px;height:8px;background:#f0f0f0;"></div>
<div class="a" style="left:22px;top:983px;width:327px;height:8px;background:#cdcdcd;"></div>
<svg class="a" style="left:8px;top:988px" width="6" height="6" viewBox="0 0 6 6"><path d="M5.5 0.5 L1 5" stroke="#505050" stroke-width="1.8"/></svg>
<svg class="a" style="left:463px;top:988px" width="6" height="6" viewBox="0 0 6 6"><path d="M0.5 0.5 L5 5" stroke="#505050" stroke-width="1.8"/></svg>
<div class="a" style="left:483px;top:82px;width:1003px;height:629px;background:#fff;border-top:1px solid #d8d8d8;border-left:1px solid #d8d8d8;border-bottom:1px solid #d8d8d8"></div>
<div class="a" style="left:484px;top:83px;width:1002px;height:29px;background:linear-gradient(#e8e8e8,#e3e3e3);border-bottom:1px solid #d8d8d8"></div>
<div class="a" style="left:484px;top:83px;width:127px;height:29px;background:linear-gradient(#f3f3f3,#efefef);border-right:1px solid #d8d8d8"></div>
<svg class="a" style="left:491px;top:91px" width="12" height="14" viewBox="0 0 12 14">
<path d="M0.5 0.5 H7.5 L10.5 3.5 V13.5 H0.5Z" fill="#eaf2fb" stroke="#9a7b3a"/>
<path d="M7.5 0.5 L10.5 3.5 H7.5Z" fill="#e8c070"/>
<path d="M6.4 3.2 V9.6 Q6.4 11.6 4.6 11.6 Q3.4 11.6 3 10.6" stroke="#2f66a8" stroke-width="2" fill="none"/>
</svg>
<div class="t" style="left:507px;top:90px;letter-spacing:-0.39px">FristLib.java</div>
<svg class="a" style="left:592px;top:93px" width="10" height="10" viewBox="0 0 10 10"><g fill="#fff" shape-rendering="crispEdges"><rect x="1" y="1" width="1" height="1"/><rect x="2" y="1" width="1" height="1"/><rect x="7" y="1" width="1" height="1"/><rect x="8" y="1" width="1" height="1"/><rect x="1" y="2" width="1" height="1"/><rect x="2" y="2" width="1" height="1"/><rect x="3" y="2" width="1" height="1"/><rect x="6" y="2" width="1" height="1"/><rect x="7" y="2" width="1" height="1"/><rect x="8" y="2" width="1" height="1"/><rect x="2" y="3" width="1" height="1"/><rect x="3" y="3" width="1" height="1"/><rect x="4" y="3" width="1" height="1"/><rect x="5" y="3" width="1" height="1"/><rect x="6" y="3" width="1" height="1"/><rect x="7" y="3" width="1" height="1"/><rect x="3" y="4" width="1" height="1"/><rect x="4" y="4" width="1" height="1"/><rect x="5" y="4" width="1" height="1"/><rect x="6" y="4" width="1" height="1"/><rect x="3" y="5" width="1" height="1"/><rect x="4" y="5" width="1" height="1"/><rect x="5" y="5" width="1" height="1"/><rect x="6" y="5" width="1" height="1"/><rect x="2" y="6" width="1" height="1"/><rect x="3" y="6" width="1" height="1"/><rect x="4" y="6" width="1" height="1"/><rect x="5" y="6" width="1" height="1"/><rect x="6" y="6" width="1" height="1"/><rect x="7" y="6" width="1" height="1"/><rect x="1" y="7" width="1" height="1"/><rect x="2" y="7" width="1" height="1"/><rect x="3" y="7" width="1" height="1"/><rect x="6" y="7" width="1" height="1"/><rect x="7" y="7" width="1" height="1"/><rect x="8" y="7" width="1" height="1"/><rect x="1" y="8" width="1" height="1"/><rect x="2" y="8" width="1" height="1"/><rect x="7" y="8" width="1" height="1"/><rect x="8" y="8" width="1" height="1"/></g><g fill="#5a5a5a" shape-rendering="crispEdges"><rect x="0" y="0" width="1" height="1"/><rect x="1" y="0" width="1" height="1"/><rect x="2" y="0" width="1" height="1"/><rect x="7" y="0" width="1" height="1"/><rect x="8" y="0" width="1" height="1"/><rect x="9" y="0" width="1" height="1"/><rect x="0" y="1" width="1" height="1"/><rect x="3" y="1" width="1" height="1"/><rect x="6" y="1" width="1" height="1"/><rect x="9" y="1" width="1" height="1"/><rect x="0" y="2" width="1" height="1"/><rect x="4" y="2" width="1" height="1"/><rect x="5" y="2" width="1" height="1"/><rect x="9" y="2" width="1" height="1"/><rect x="1" y="3" width="1" height="1"/><rect x="8" y="3" width="1" height="1"/><rect x="2" y="4" width="1" height="1"/><rect x="7" y="4" width="1" height="1"/><rect x="2" y="5" width="1" height="1"/><rect x="7" y="5" width="1" height="1"/><rect x="1" y="6" width="1" height="1"/><rect x="8" y="6" width="1" height="1"/><rect x="0" y="7" width="1" height="1"/><rect x="4" y="7" width="1" height="1"/><rect x="5" y="7" width="1" height="1"/><rect x="9" y="7" width="1" height="1"/><rect x="0" y="8" width="1" height="1"/><rect x="3" y="8" width="1" height="1"/><rect x="6" y="8" width="1" height="1"/><rect x="9" y="8" width="1" height="1"/><rect x="0" y="9" width="1" height="1"/><rect x="1" y="9" width="1" height="1"/><rect x="2" y="9" width="1" height="1"/><rect x="7" y="9" width="1" height="1"/><rect x="8" y="9" width="1" height="1"/><rect x="9" y="9" width="1" height="1"/></g></svg>
<div class="a" style="left:484px;top:112px;width:12px;height:598px;background:#f8f8f8;"></div>
<svg class="a" style="left:484px;top:112px" width="12" height="20" viewBox="0 0 12 20"><defs><pattern id="chk" width="2" height="2" patternUnits="userSpaceOnUse"><rect width="2" height="2" fill="#fff"/><rect width="1" height="1" fill="#3a8ef0"/><rect x="1" y="1" width="1" height="1" fill="#3a8ef0"/></pattern></defs><rect width="12" height="20" fill="url(#chk)"/><rect x="0" y="0" width="12" height="1" fill="#3a8ef0"/><rect x="0" y="19" width="12" height="1" fill="#3a8ef0"/></svg>
<div class="a" style="left:523px;top:112px;width:1px;height:578px;background:#f5f5f5;"></div>
<div class="a" style="left:526px;top:112px;width:960px;height:20px;background:#e8f2fe;"></div>
<div class="a" style="left:496px;top:690px;width:28px;height:20px;background:#f7f7f7;"></div>
<div class="a" style="left:524px;top:690px;width:962px;height:20px;background:#f0f0f0;"></div>
<svg class="a" style="left:530px;top:695px" width="8" height="10" viewBox="0 0 8 10"><path d="M6.5 0.8 L1.5 5 L6.5 9.2" stroke="#a8a8a8" stroke-width="1.8" fill="none"/></svg>
<svg class="a" style="left:514px;top:257px" width="9" height="9" viewBox="0 0 9 9"><circle cx="4.5" cy="4.5" r="4" fill="#e8eef8" stroke="#a8b0c0" stroke-width="0.9"/><path d="M2 4.5H7" stroke="#333" stroke-width="1.2"/></svg>
<div class="ln" style="top:115px">1</div>
<div class="ln" style="top:135px">2</div>
<div class="ln" style="top:155px">3</div>
<div class="ln" style="top:175px">4</div>
<div class="ln" style="top:195px">5</div>
<div class="ln" style="top:215px">6</div>
<div class="ln" style="top:235px">7</div>
<div class="ln" style="top:255px">8</div>
<div class="ln" style="top:275px">9</div>
<div class="ln" style="top:295px">10</div>
<div class="ln" style="top:315px">11</div>
<div class="ln" style="top:335px">12</div>
<div class="ln" style="top:355px">13</div>
<div class="m" style="left:526px;top:115px"><span class="k">package</span> anywheresoftware.b4a.sample;</div>
<div class="m" style="left:526px;top:155px"><span class="k">import</span> anywheresoftware.b4a.BA.ShortName;</div>
<div class="m" style="left:526px;top:195px"><span class="an">@ShortName</span>(<span class="s">"FristLib"</span>)</div>
<div class="m" style="left:526px;top:215px"><span class="k">public</span> <span class="k">class</span> FristLib {</div>
<div class="m" style="left:526px;top:255px">      <span class="k">public</span> <span class="k">int</span> Multiply(<span class="k">int</span> <span style="color:#6a3e3e">x</span>) {</div>
<div class="m" style="left:526px;top:275px">          <span class="k">return</span> <span style="color:#6a3e3e">x</span> * 2;</div>
<div class="m" style="left:526px;top:315px">      }</div>
<div class="m" style="left:526px;top:335px">}</div>
<div class="a" style="left:483px;top:715px;width:1003px;height:276px;background:#fff;border-top:1px solid #d8d8d8;border-left:1px solid #d8d8d8"></div>
<div class="a" style="left:484px;top:716px;width:1002px;height:29px;background:#f0f0f0;border-bottom:1px solid #d8d8d8"></div>
<div class="a" style="left:764px;top:716px;width:104px;height:29px;background:#fff;border-left:1px solid #d8d8d8;border-right:1px solid #d8d8d8"></div>
<svg class="a" style="left:488px;top:723px" width="16" height="15" viewBox="0 0 16 15">
<path d="M0.5 0.5 H12 Q14.5 0.5 13.5 4 Q12.5 7.5 13.5 10.5 Q15 14.5 12 14.5 H0.5Z" fill="#e4ecf8" stroke="#6a7a98"/>
<path d="M0.5 8H13 M9 0.5 V14.5" stroke="#8a9ab8" stroke-width="0.8"/>
<circle cx="5.2" cy="4.2" r="2.6" fill="#e02020" stroke="#fff" stroke-width="0.5"/>
<path d="M2.8 14 V11.6 L5.2 9.2 L7.6 11.6 V14Z" fill="#f4a818"/>
</svg>
<div class="t" style="left:507px;top:723px;letter-spacing:-0.1px">Problems</div>
<svg class="a" style="left:583px;top:725px" width="11" height="11" viewBox="0 0 11 11"><text x="5.5" y="9.2" text-anchor="middle" font-family="Liberation Sans" font-size="11" font-weight="bold" font-style="italic" fill="#2a6ab0">@</text></svg>
<div class="t" style="left:600px;top:723px;letter-spacing:-0.8px">Javadoc</div>
<svg class="a" style="left:662px;top:722px" width="17" height="18" viewBox="0 0 17 18">
<path d="M1.5 1.5 H8.5 L11.5 4.5 V14.5 H1.5Z" fill="#f0f6fc" stroke="#b08a30" stroke-width="1"/>
<path d="M8.5 1.5 V4.5 H11.5Z" fill="#d8b050"/>
<path d="M5.8 4.2 Q4.5 4.2 4.5 5.5 V7.3 Q4.5 8.2 3.5 8.5 Q4.5 8.8 4.5 9.7 V11.5 Q4.5 12.8 5.8 12.8" stroke="#3a6aa8" stroke-width="1.1" fill="none"/>
<path d="M6.5 7.5H9 M6.5 9.5H9" stroke="#3a6aa8" stroke-width="1.1"/>
<path d="M6.5 11.5 H10.5 V9.8 L15 13.2 L10.5 16.6 V15 H6.5Z" fill="#f8d870" stroke="#c08020" stroke-width="1" stroke-linejoin="round"/>
</svg>
<div class="t" style="left:682px;top:723px;letter-spacing:-0.07px">Declaration</div>
<svg class="a" style="left:766px;top:720px" width="24" height="22" viewBox="0 0 24 22">
<rect x="5.75" y="4.75" width="11.5" height="9.5" rx="1" fill="#f4fcff" stroke="#3a6ab0" stroke-width="1.5"/>
<path d="M8.2 8.4H12.8M8.2 10.5H14.8" stroke="#4a5a98" stroke-width="1.1" stroke-linecap="round"/>
<rect x="9.3" y="14.5" width="4.5" height="1.5" fill="#2f5a98"/>
<rect x="6" y="16" width="11" height="1.2" rx="0.6" fill="#2f5a98"/>
</svg>
<div class="t" style="left:789px;top:723px;letter-spacing:-0.47px">Console</div>
<svg class="a" style="left:849px;top:726px" width="10" height="10" viewBox="0 0 10 10"><g fill="#fff" shape-rendering="crispEdges"><rect x="1" y="1" width="1" height="1"/><rect x="2" y="1" width="1" height="1"/><rect x="7" y="1" width="1" height="1"/><rect x="8" y="1" width="1" height="1"/><rect x="1" y="2" width="1" height="1"/><rect x="2" y="2" width="1" height="1"/><rect x="3" y="2" width="1" height="1"/><rect x="6" y="2" width="1" height="1"/><rect x="7" y="2" width="1" height="1"/><rect x="8" y="2" width="1" height="1"/><rect x="2" y="3" width="1" height="1"/><rect x="3" y="3" width="1" height="1"/><rect x="4" y="3" width="1" height="1"/><rect x="5" y="3" width="1" height="1"/><rect x="6" y="3" width="1" height="1"/><rect x="7" y="3" width="1" height="1"/><rect x="3" y="4" width="1" height="1"/><rect x="4" y="4" width="1" height="1"/><rect x="5" y="4" width="1" height="1"/><rect x="6" y="4" width="1" height="1"/><rect x="3" y="5" width="1" height="1"/><rect x="4" y="5" width="1" height="1"/><rect x="5" y="5" width="1" height="1"/><rect x="6" y="5" width="1" height="1"/><rect x="2" y="6" width="1" height="1"/><rect x="3" y="6" width="1" height="1"/><rect x="4" y="6" width="1" height="1"/><rect x="5" y="6" width="1" height="1"/><rect x="6" y="6" width="1" height="1"/><rect x="7" y="6" width="1" height="1"/><rect x="1" y="7" width="1" height="1"/><rect x="2" y="7" width="1" height="1"/><rect x="3" y="7" width="1" height="1"/><rect x="6" y="7" width="1" height="1"/><rect x="7" y="7" width="1" height="1"/><rect x="8" y="7" width="1" height="1"/><rect x="1" y="8" width="1" height="1"/><rect x="2" y="8" width="1" height="1"/><rect x="7" y="8" width="1" height="1"/><rect x="8" y="8" width="1" height="1"/></g><g fill="#5a5a5a" shape-rendering="crispEdges"><rect x="0" y="0" width="1" height="1"/><rect x="1" y="0" width="1" height="1"/><rect x="2" y="0" width="1" height="1"/><rect x="7" y="0" width="1" height="1"/><rect x="8" y="0" width="1" height="1"/><rect x="9" y="0" width="1" height="1"/><rect x="0" y="1" width="1" height="1"/><rect x="3" y="1" width="1" height="1"/><rect x="6" y="1" width="1" height="1"/><rect x="9" y="1" width="1" height="1"/><rect x="0" y="2" width="1" height="1"/><rect x="4" y="2" width="1" height="1"/><rect x="5" y="2" width="1" height="1"/><rect x="9" y="2" width="1" height="1"/><rect x="1" y="3" width="1" height="1"/><rect x="8" y="3" width="1" height="1"/><rect x="2" y="4" width="1" height="1"/><rect x="7" y="4" width="1" height="1"/><rect x="2" y="5" width="1" height="1"/><rect x="7" y="5" width="1" height="1"/><rect x="1" y="6" width="1" height="1"/><rect x="8" y="6" width="1" height="1"/><rect x="0" y="7" width="1" height="1"/><rect x="4" y="7" width="1" height="1"/><rect x="5" y="7" width="1" height="1"/><rect x="9" y="7" width="1" height="1"/><rect x="0" y="8" width="1" height="1"/><rect x="3" y="8" width="1" height="1"/><rect x="6" y="8" width="1" height="1"/><rect x="9" y="8" width="1" height="1"/><rect x="0" y="9" width="1" height="1"/><rect x="1" y="9" width="1" height="1"/><rect x="2" y="9" width="1" height="1"/><rect x="7" y="9" width="1" height="1"/><rect x="8" y="9" width="1" height="1"/><rect x="9" y="9" width="1" height="1"/></g></svg>
<div class="t" style="left:485px;top:747px;letter-spacing:0.18px">&lt;terminated&gt;</div>
<div class="t" style="left:581px;top:747px;letter-spacing:-0.28px">Javadoc Generation</div>
<div class="a" style="left:484px;top:765px;width:1002px;height:1px;background:#a0a0a0;"></div>
<div class="m r" style="left:486px;top:765px">	at jdk.javadoc/jdk.javadoc.internal.tool.Start.preprocess(Start.java:727)</div>
<div class="m r" style="left:486px;top:785px">	at jdk.javadoc/jdk.javadoc.internal.tool.Start.begin(Start.java:374)</div>
<div class="m r" style="left:486px;top:805px">	at jdk.javadoc/jdk.javadoc.internal.tool.Start.begin(Start.java:342)</div>
<div class="m r" style="left:486px;top:825px">	at jdk.javadoc/jdk.javadoc.internal.tool.Main.execute(Main.java:63)</div>
<div class="m r" style="left:486px;top:845px">	at jdk.javadoc/jdk.javadoc.internal.tool.Main.main(Main.java:52)</div>
<div class="m r" style="left:486px;top:865px">Caused by: java.lang.ClassNotFoundException: com.sun.javadoc.Doclet</div>
<div class="m r" style="left:486px;top:885px">	at java.base/java.net.URLClassLoader.findClass(URLClassLoader.java:435)</div>
<div class="m r" style="left:486px;top:905px">	at java.base/java.lang.ClassLoader.loadClass(ClassLoader.java:589)</div>
<div class="m r" style="left:486px;top:925px">	at java.base/java.lang.ClassLoader.loadClass(ClassLoader.java:522)</div>
<div class="m r" style="left:486px;top:945px">	... 16 more</div>
<div class="a" style="left:657px;top:942px;width:1px;height:20px;background:#000;"></div>
<div class="a" style="left:484px;top:983px;width:1002px;height:8px;background:#f0f0f0;"></div>
<svg class="a" style="left:490px;top:988px" width="6" height="6" viewBox="0 0 6 6"><path d="M5.5 0.5 L1 5" stroke="#b8b8b8" stroke-width="1.8"/></svg>
</body></html>
